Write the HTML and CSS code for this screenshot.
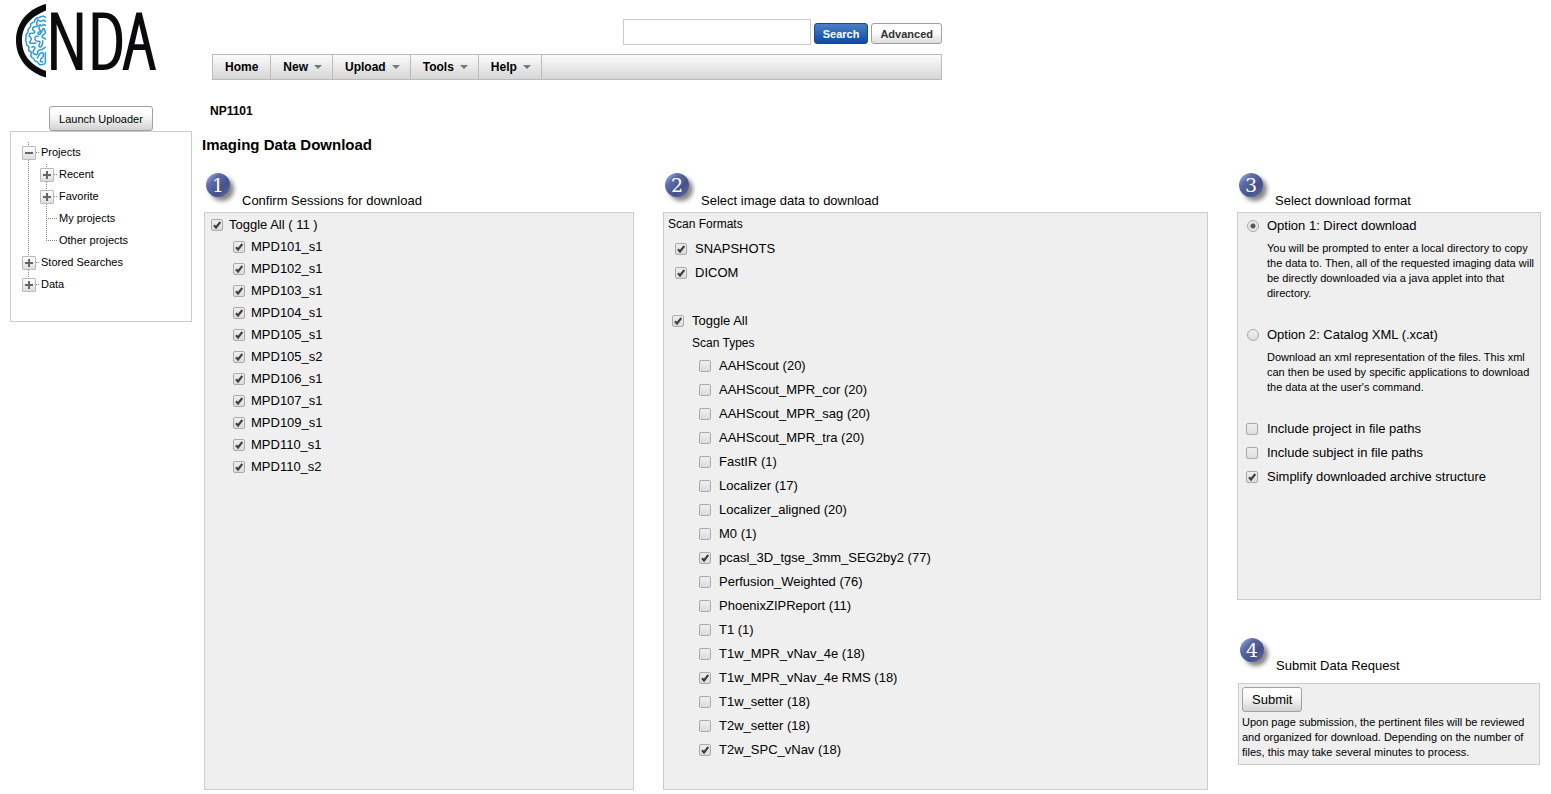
FILE: index.html
```html
<!DOCTYPE html>
<html lang="en">
<head>
<meta charset="utf-8">
<title>CNDA - Imaging Data Download</title>
<link rel="stylesheet" href="styles.css">
</head>
<body>
<svg class="defs" width="0" height="0" aria-hidden="true">
  <defs>
    <linearGradient id="ball" x1="0" y1="0" x2="1" y2="1">
      <stop offset="0" stop-color="#b9c6ee"/>
      <stop offset="0.3" stop-color="#5d6da8"/>
      <stop offset="0.65" stop-color="#46518a"/>
      <stop offset="1" stop-color="#5a6ba6"/>
    </linearGradient>
    <filter id="soft" x="-40%" y="-40%" width="180%" height="180%"><feGaussianBlur stdDeviation="2"/></filter>
  </defs>
</svg>
<div class="page">
  <aside class="sidebar">
    <a class="logo" href="#" aria-label="CNDA home">
      <svg width="145" height="76" viewBox="14 3 145 76">
        <path d="M46 4C30 8 16 21 16 40.500S30 73 46 77.500V71C33 66 22 57 22 40.500S33 16 46 10.500Z" fill="#0a0b0d"/>
        <g transform="translate(14 0) scale(0.3333)" fill="none" stroke="#2b9ad6" stroke-width="4.500" stroke-linejoin="round" stroke-linecap="round">
          <path d="M94 52C88 46 80 50 76 52S62 54 62 62 48 66 50 76 38 84 42 92 34 100 36 108 32 118 36 124 34 136 42 138 38 152 48 154 44 168 54 172 58 184 66 184 72 198 82 194 92 196 94 188V158"/>
          <path d="M94 64C86 54 82 70 76 62S66 70 70 76 60 76 56 84 66 92 62 98 48 94 46 104 54 110 52 118 42 126 50 130H66"/>
          <path d="M94 76C88 68 84 82 80 76S72 84 78 90 70 94 72 102 84 96 86 88 94 92 94 98 84 104 84 110 94 112 94 118"/>
          <path d="M72 110C66 106 60 112 64 120S76 120 78 126 70 134 76 140 88 130 86 122"/>
          <path d="M54 142C62 136 66 144 60 150S58 162 66 164 68 150 76 150 90 146 94 142"/>
          <path d="M70 174C76 168 74 160 82 158S90 170 84 174 76 186 86 186"/>
        </g>
        <text class="logo-text" x="46" y="69">NDA</text>
      </svg>
    </a>
    <button class="btn launch" type="button">Launch Uploader</button>
    <nav class="tree-box" aria-label="Browse">
      <ul class="tree">
        <li>
          <div class="node"><button class="toggle open" type="button" aria-label="Collapse Projects"></button><a href="#">Projects</a></div>
          <ul class="tree subtree">
            <li><div class="node"><button class="toggle" type="button" aria-label="Expand Recent"></button><a href="#">Recent</a></div></li>
            <li><div class="node"><button class="toggle" type="button" aria-label="Expand Favorite"></button><a href="#">Favorite</a></div></li>
            <li><div class="node leaf"><a href="#">My projects</a></div></li>
            <li><div class="node leaf"><a href="#">Other projects</a></div></li>
          </ul>
        </li>
        <li><div class="node"><button class="toggle" type="button" aria-label="Expand Stored Searches"></button><a href="#">Stored Searches</a></div></li>
        <li><div class="node"><button class="toggle" type="button" aria-label="Expand Data"></button><a href="#">Data</a></div></li>
      </ul>
    </nav>
  </aside>

  <main class="main">
    <header class="top">
      <form class="search" onsubmit="return false">
        <input class="search-box" type="text" aria-label="Search">
        <button class="btn small primary" type="submit">Search</button>
        <button class="btn small" type="button">Advanced</button>
      </form>
      <nav class="menu" aria-label="Main">
        <a href="#">Home</a>
        <a class="drop" href="#">New</a>
        <a class="drop" href="#">Upload</a>
        <a class="drop" href="#">Tools</a>
        <a class="drop" href="#">Help</a>
      </nav>
    </header>
    <div class="crumb">NP1101</div>
    <h1>Imaging Data Download</h1>

    <form class="steps" onsubmit="return false">
      <section class="step">
        <h2 class="step-head">
          <svg class="badge" width="36" height="38" viewBox="0 0 36 38"><circle cx="18" cy="19" r="12" fill="#555" opacity="0.7" filter="url(#soft)"/><circle cx="14" cy="15" r="12" fill="url(#ball)"/><text x="14" y="22">1</text></svg>
          <span>Confirm Sessions for download</span>
        </h2>
        <div class="panel sessions">
          <label><input type="checkbox" checked>Toggle All ( 11 )</label>
          <div class="session-list">
            <label><input type="checkbox" checked>MPD101_s1</label>
            <label><input type="checkbox" checked>MPD102_s1</label>
            <label><input type="checkbox" checked>MPD103_s1</label>
            <label><input type="checkbox" checked>MPD104_s1</label>
            <label><input type="checkbox" checked>MPD105_s1</label>
            <label><input type="checkbox" checked>MPD105_s2</label>
            <label><input type="checkbox" checked>MPD106_s1</label>
            <label><input type="checkbox" checked>MPD107_s1</label>
            <label><input type="checkbox" checked>MPD109_s1</label>
            <label><input type="checkbox" checked>MPD110_s1</label>
            <label><input type="checkbox" checked>MPD110_s2</label>
          </div>
        </div>
      </section>

      <section class="step">
        <h2 class="step-head">
          <svg class="badge" width="36" height="38" viewBox="0 0 36 38"><circle cx="18" cy="19" r="12" fill="#555" opacity="0.7" filter="url(#soft)"/><circle cx="14" cy="15" r="12" fill="url(#ball)"/><text x="14" y="22">2</text></svg>
          <span>Select image data to download</span>
        </h2>
        <div class="panel scans">
          <h3>Scan Formats</h3>
          <div class="formats">
            <label><input type="checkbox" checked>SNAPSHOTS</label>
            <label><input type="checkbox" checked>DICOM</label>
          </div>
          <label class="all"><input type="checkbox" checked>Toggle All</label>
          <h3 class="types-title">Scan Types</h3>
          <div class="types">
            <label><input type="checkbox">AAHScout (20)</label>
            <label><input type="checkbox">AAHScout_MPR_cor (20)</label>
            <label><input type="checkbox">AAHScout_MPR_sag (20)</label>
            <label><input type="checkbox">AAHScout_MPR_tra (20)</label>
            <label><input type="checkbox">FastIR (1)</label>
            <label><input type="checkbox">Localizer (17)</label>
            <label><input type="checkbox">Localizer_aligned (20)</label>
            <label><input type="checkbox">M0 (1)</label>
            <label><input type="checkbox" checked>pcasl_3D_tgse_3mm_SEG2by2 (77)</label>
            <label><input type="checkbox">Perfusion_Weighted (76)</label>
            <label><input type="checkbox">PhoenixZIPReport (11)</label>
            <label><input type="checkbox">T1 (1)</label>
            <label><input type="checkbox">T1w_MPR_vNav_4e (18)</label>
            <label><input type="checkbox" checked>T1w_MPR_vNav_4e RMS (18)</label>
            <label><input type="checkbox">T1w_setter (18)</label>
            <label><input type="checkbox">T2w_setter (18)</label>
            <label><input type="checkbox" checked>T2w_SPC_vNav (18)</label>
          </div>
        </div>
      </section>

      <div class="side">
        <section>
          <h2 class="step-head">
            <svg class="badge" width="36" height="38" viewBox="0 0 36 38"><circle cx="18" cy="19" r="12" fill="#555" opacity="0.7" filter="url(#soft)"/><circle cx="14" cy="15" r="12" fill="url(#ball)"/><text x="14" y="22">3</text></svg>
            <span>Select download format</span>
          </h2>
          <div class="panel options">
            <label><input type="radio" name="format" checked>Option 1: Direct download</label>
            <p>You will be prompted to enter a local directory to copy the data to. Then, all of the requested imaging data will be directly downloaded via a java applet into that directory.</p>
            <label><input type="radio" name="format">Option 2: Catalog XML (.xcat)</label>
            <p>Download an xml representation of the files. This xml can then be used by specific applications to download the data at the user's command.</p>
            <div class="flags">
              <label><input type="checkbox">Include project in file paths</label>
              <label><input type="checkbox">Include subject in file paths</label>
              <label><input type="checkbox" checked>Simplify downloaded archive structure</label>
            </div>
          </div>
        </section>
        <section class="submit-step">
          <h2 class="step-head">
            <svg class="badge" width="36" height="38" viewBox="0 0 36 38"><circle cx="18" cy="19" r="12" fill="#555" opacity="0.7" filter="url(#soft)"/><circle cx="14" cy="15" r="12" fill="url(#ball)"/><text x="14" y="22">4</text></svg>
            <span>Submit Data Request</span>
          </h2>
          <div class="panel submit-panel">
            <button class="btn submit" type="submit">Submit</button>
            <p>Upon page submission, the pertinent files will be reviewed and organized for download. Depending on the number of files, this may take several minutes to process.</p>
          </div>
        </section>
      </div>
    </form>
  </main>
</div>
</body>
</html>
```
FILE: styles.css
```css
* { box-sizing: border-box; }

body {
  margin: 0;
  background: #fff;
  color: #000;
  font-family: "Liberation Sans", Arial, sans-serif;
  font-size: 13px;
}

h1, h2, h3, p, ul { margin: 0; padding: 0; }
ul { list-style: none; }
a { color: inherit; text-decoration: none; }
input { margin: 0; }
.defs { position: absolute; }

.page {
  display: grid;
  grid-template-columns: 182px minmax(0, 1fr);
  column-gap: 10px;
  padding: 0 10px 4px;
}

/* Sidebar */
.sidebar {
  display: flex;
  flex-direction: column;
  align-items: center;
}

.logo {
  align-self: flex-start;
  height: 103px;
  padding: 3px 0 0 4px;
  margin-bottom: 3px;
}
.logo svg { display: block; overflow: visible; }
.logo-text {
  font-family: "Open Sans Condensed Light", "Open Sans ExtraCondensed", "Noto Sans ExtraCondensed", "Open Sans Condensed", "Liberation Sans Narrow", "Liberation Sans", sans-serif;
  font-size: 78px;
  font-weight: 300;
  fill: #0a0b0d;
  stroke: #0a0b0d;
  stroke-width: 2px;
}

.btn {
  height: 25px;
  padding: 0 9px;
  border: 1px solid #a0a0a0;
  border-radius: 3px;
  background: linear-gradient(#fff 20%, #f6f6f6 45%, #d2d2d2);
  color: #000;
  font-family: inherit;
  font-size: 11px;
}

.tree-box {
  width: 100%;
  padding: 10px 11px 25px;
  border: 1px solid #ccc;
  font-size: 11px;
}
.tree > li {
  background: repeating-linear-gradient(#888 0 1px, transparent 1px 2px) 6px 0 / 1px 100% no-repeat;
}
.tree > li:last-child { background-size: 1px 10px; }
.subtree { padding-left: 18px; }
.node {
  display: flex;
  align-items: center;
  gap: 5px;
  height: 22px;
  line-height: 18px;
  background: repeating-linear-gradient(90deg, #888 0 1px, transparent 1px 2px) 6px 10px / 11px 1px no-repeat;
}
.leaf { padding-left: 19px; }
.node a { margin-bottom: 3px; }

.toggle {
  width: 14px;
  height: 14px;
  padding: 0;
  border: 1px solid #bbb;
  border-radius: 1px;
  background:
    linear-gradient(#666, #666) center / 8px 2px no-repeat,
    linear-gradient(#666, #666) center / 2px 8px no-repeat,
    linear-gradient(#fff, #ddd);
}
.toggle.open {
  background:
    linear-gradient(#666, #666) center / 8px 2px no-repeat,
    linear-gradient(#fff, #ddd);
}

/* Header */
.top {
  max-width: 740px;
  padding: 19px 0 0 10px;
}
.search {
  display: flex;
  justify-content: flex-end;
  align-items: flex-end;
  gap: 3px;
}
.search-box {
  width: 188px;
  height: 26px;
  padding: 0 4px;
  border: 1px solid #ccc;
  font: 13px "Liberation Sans", Arial, sans-serif;
}
.btn.small {
  height: 21px;
  margin-bottom: 1px;
  padding: 0 8px;
  color: #333;
  font-weight: bold;
  background: linear-gradient(#fff 40%, #ddd);
}
.btn.primary {
  border-color: #22447f;
  background: linear-gradient(#4a7fc8, #0c4ba4);
  color: #fff;
}
.menu {
  display: flex;
  height: 26px;
  margin-top: 9px;
  border: 1px solid #bbb;
  background: linear-gradient(#fbfbfb, #d6d6d6);
  font-size: 12px;
  font-weight: bold;
  line-height: 24px;
}
.menu a {
  display: flex;
  align-items: center;
  gap: 6px;
  padding: 0 12px;
  border-right: 1px solid #bbb;
}
.menu .drop { padding-right: 10px; }
.drop::after {
  content: "";
  border: 4px solid transparent;
  border-top-color: #777;
  border-bottom-width: 0;
}

.crumb {
  margin-top: 22px;
  padding-left: 8px;
  font-size: 12px;
  font-weight: bold;
  line-height: 18px;
}
h1 {
  margin-top: 15px;
  font-size: 15px;
  line-height: 20px;
}

/* Steps */
.steps {
  display: grid;
  grid-template-columns: 430fr minmax(0, 545fr) 304px;
  column-gap: 29px;
  margin-top: 15px;
  padding-left: 2px;
}
.step {
  display: flex;
  flex-direction: column;
}
.step-head {
  display: flex;
  align-items: flex-end;
  gap: 2px;
  height: 42px;
  font-size: 13px;
  font-weight: normal;
  line-height: 22px;
}
.badge { align-self: flex-start; }
.badge text {
  fill: #fff;
  font-family: "DejaVu Serif", serif;
  font-size: 19px;
  text-anchor: middle;
}

.panel {
  flex: 1;
  border: 1px solid #ccc;
  background: #efefef;
}
.panel label {
  display: flex;
  align-items: center;
  line-height: 24px;
}
h3 {
  font-size: 12px;
  font-weight: normal;
  line-height: 20px;
}

.sessions { padding: 1px 0 0 6px; }
.sessions label { gap: 6px; line-height: 22px; }
.session-list { padding-left: 22px; }

.scans { padding: 1px 4px 27px; }
.scans label { gap: 8px; }
.formats { padding: 3px 0 24px 7px; }
.all { padding-left: 4px; }
.types-title { padding-left: 24px; }
.types { padding: 1px 0 0 31px; }

.options { padding: 1px 4px 110px 8px; }
.options label { gap: 8px; }
.options input { margin-left: 1px; }
.options p { padding: 3px 0 22px 21px; }
.options .flags { padding-top: 0; }
.flags label { gap: 9px; }
.flags input { margin-left: 0; }
.panel p {
  font-size: 11px;
  line-height: 15px;
}

.submit-step { padding: 35px 1px 0; }
.submit-panel {
  margin-top: 6px;
  padding: 3px;
}
.btn.submit { font-size: 13px; }
.submit-panel p { padding: 3px 0 1px; }

/* Ticks and radios */
input[type="checkbox"],
input[type="radio"] {
  appearance: none;
  flex: none;
  width: 12px;
  height: 12px;
  border: 1px solid #aaa;
  border-radius: 2px;
  background: linear-gradient(#eee, #ddd);
}
input[type="checkbox"]:checked {
  background:
    url("data:image/svg+xml,%3Csvg xmlns='http://www.w3.org/2000/svg' viewBox='0 0 10 10'%3E%3Cpath d='M2 5.300 4 7.500 8.300 2' fill='none' stroke='%23404040' stroke-width='2.100'/%3E%3C/svg%3E") center / 10px 10px no-repeat,
    linear-gradient(#eee, #ddd);
}
input[type="radio"] { border-radius: 50%; }
input[type="radio"]:checked {
  background: radial-gradient(circle, #555 0 2px, #e6e6e6 3px);
}
```
